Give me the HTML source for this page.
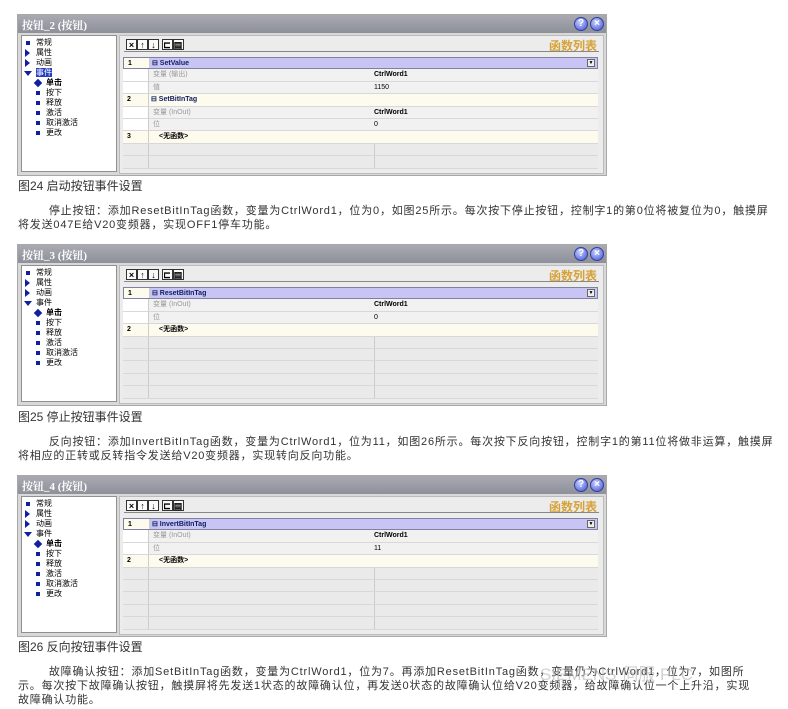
<!DOCTYPE html>
<html><head><meta charset="utf-8"><style>
*{margin:0;padding:0;box-sizing:border-box}
body{width:788px;height:709px;background:#fff;position:relative;overflow:hidden;font-family:"Liberation Sans","Noto Sans CJK SC",sans-serif}
.p{position:absolute;left:17px;width:590px;height:162px;background:#d8d8d8;border:1px solid #a8a8a8}
.tb{position:absolute;left:0;top:0;width:588px;height:18px;background:linear-gradient(#a9aab2,#8e909a);color:#fff;font:bold 11px "Liberation Serif","Noto Serif CJK SC",serif;padding:2px 0 0 4px}
.ic{position:absolute;top:2px;width:14px;height:14px;border-radius:50%;background:radial-gradient(circle at 40% 35%,#c8d0ff,#4050d0);border:1px solid #3040a0;color:#fff;font:bold 10px/12px sans-serif;text-align:center}
.tree{position:absolute;left:3px;top:20px;width:96px;height:137px;background:#fff;border:1px solid #909090;font:8px/10px "Liberation Sans","Noto Sans CJK SC",sans-serif;color:#000;padding-top:2px}
.tree div{height:10px;white-space:nowrap;position:relative}
.sq::before{content:"";position:absolute;width:4px;height:4px;background:#1020a0;left:-10px;top:3px}
.tr::before{content:"";position:absolute;left:-11px;top:1px;border-left:5px solid #1020a0;border-top:4px solid transparent;border-bottom:4px solid transparent}
.dn::before{content:"";position:absolute;left:-12px;top:3px;border-top:5px solid #1020a0;border-left:4px solid transparent;border-right:4px solid transparent}
.dm::before{content:"";position:absolute;left:-11px;top:2px;width:6px;height:6px;background:#1020a0;transform:rotate(45deg)}
.ra{position:absolute;left:101px;top:20px;width:485px;height:139px;background:#ececec;border:1px solid #bbb}
.tools{position:absolute;left:6px;top:3px;font:bold 9px/10px sans-serif}
.tools span{display:inline-block;width:11px;height:11px;border:1px solid #333;background:#fafafa;text-align:center;margin-right:0;vertical-align:top}
.fl{position:absolute;right:6px;top:1px;color:#d6a238;font:bold 12px "Liberation Sans","Noto Sans CJK SC",sans-serif}
.hl{position:absolute;left:4px;right:4px;top:15px;border-top:1px solid #888}
.tbl{position:absolute;left:3px;top:21px;width:475px}
.r{height:12.4px;border-bottom:1px solid #d8d8d8;font:7px/12px "Liberation Sans","Noto Sans CJK SC",sans-serif;position:relative;background:#f1f1f1}
.r .n{position:absolute;left:0;width:26px;height:100%;padding-left:4px;font-weight:bold;border-right:1px solid #ccc;background:#fff}
.r .a{position:absolute;left:30px;color:#999}
.r .b{position:absolute;left:251px;font-weight:bold}
.r .c{position:absolute;left:251px}
.h{background:#fdfaee}.h .n{background:#fdfaee}
.pu{background:#c8c4f4;border:1px solid #8080a0}
.pu .n{background:#fdfaee}
.fn{position:absolute;left:28px;font-weight:bold;color:#102060}
.e{background:#eaeaea}.e .n{background:#eaeaea}
.e::after{content:"";position:absolute;left:251px;top:0;height:100%;border-left:1px solid #ccc}
.cap{position:absolute;left:18px;font-size:12px;color:#333}
.tx{position:absolute;left:18px;width:775px;font-size:11px;line-height:14px;color:#333;letter-spacing:0.8px;white-space:nowrap}
</style></head><body>

<div class="p" style="top:14px">
<div class="tb">按钮_2 (按钮)</div><div class="ic" style="left:556px">?</div><div class="ic" style="left:572px">×</div>
<div class="tree" style="padding-left:14px"><div class="sq">常规</div><div class="tr">属性</div><div class="tr">动画</div><div class="dn"><span style="background:#2840c0;color:#fff">事件</span></div><div class="dm" style="left:10px;font-weight:bold">单击</div><div class="sq" style="left:10px">按下</div><div class="sq" style="left:10px">释放</div><div class="sq" style="left:10px">激活</div><div class="sq" style="left:10px">取消激活</div><div class="sq" style="left:10px">更改</div></div>
<div class="ra"><div class="tools"><span>×</span><span>↑</span><span>↓</span> <span>⊏</span><span>▤</span></div><div class="fl">函数列表</div><div class="hl"></div>
<div class="tbl">
<div class="r pu"><div class="n">1</div><div class="fn">⊟ SetValue</div><div style="position:absolute;right:2px;top:1px;width:8px;height:8px;background:#eee;border:1px solid #666;font-size:5px;line-height:7px;text-align:center">▼</div></div>
<div class="r"><div class="n"></div><div class="a">变量 (输出)</div><div class="b">CtrlWord1</div></div>
<div class="r"><div class="n"></div><div class="a">值</div><div class="c">1150</div></div>
<div class="r h"><div class="n">2</div><div class="fn">⊟ SetBitInTag</div></div>
<div class="r"><div class="n"></div><div class="a">变量 (InOut)</div><div class="b">CtrlWord1</div></div>
<div class="r"><div class="n"></div><div class="a">位</div><div class="c">0</div></div>
<div class="r h"><div class="n">3</div><div class="fn" style="left:36px;color:#000">&lt;无函数&gt;</div></div>
<div class="r e"><div class="n"></div></div><div class="r e"><div class="n"></div></div>
</div></div></div>
<div class="cap" style="top:177px">图24 启动按钮事件设置</div>
<div class="tx" style="top:204px">&nbsp;&nbsp;&nbsp;&nbsp;&nbsp;&nbsp;&nbsp;&nbsp;停止按钮：添加ResetBitInTag函数，变量为CtrlWord1，位为0，如图25所示。每次按下停止按钮，控制字1的第0位将被复位为0，触摸屏<br>将发送047E给V20变频器，实现OFF1停车功能。</div>

<div class="p" style="top:244px">
<div class="tb">按钮_3 (按钮)</div><div class="ic" style="left:556px">?</div><div class="ic" style="left:572px">×</div>
<div class="tree" style="padding-left:14px"><div class="sq">常规</div><div class="tr">属性</div><div class="tr">动画</div><div class="dn">事件</div><div class="dm" style="left:10px;font-weight:bold">单击</div><div class="sq" style="left:10px">按下</div><div class="sq" style="left:10px">释放</div><div class="sq" style="left:10px">激活</div><div class="sq" style="left:10px">取消激活</div><div class="sq" style="left:10px">更改</div></div>
<div class="ra"><div class="tools"><span>×</span><span>↑</span><span>↓</span> <span>⊏</span><span>▤</span></div><div class="fl">函数列表</div><div class="hl"></div>
<div class="tbl">
<div class="r pu"><div class="n">1</div><div class="fn">⊟ ResetBitInTag</div><div style="position:absolute;right:2px;top:1px;width:8px;height:8px;background:#eee;border:1px solid #666;font-size:5px;line-height:7px;text-align:center">▼</div></div>
<div class="r"><div class="n"></div><div class="a">变量 (InOut)</div><div class="b">CtrlWord1</div></div>
<div class="r"><div class="n"></div><div class="a">位</div><div class="c">0</div></div>
<div class="r h"><div class="n">2</div><div class="fn" style="left:36px;color:#000">&lt;无函数&gt;</div></div>
<div class="r e"><div class="n"></div></div><div class="r e"><div class="n"></div></div><div class="r e"><div class="n"></div></div><div class="r e"><div class="n"></div></div><div class="r e"><div class="n"></div></div>
</div></div></div>
<div class="cap" style="top:408px">图25 停止按钮事件设置</div>
<div class="tx" style="top:435px">&nbsp;&nbsp;&nbsp;&nbsp;&nbsp;&nbsp;&nbsp;&nbsp;反向按钮：添加InvertBitInTag函数，变量为CtrlWord1，位为11，如图26所示。每次按下反向按钮，控制字1的第11位将做非运算，触摸屏<br>将相应的正转或反转指令发送给V20变频器，实现转向反向功能。</div>

<div class="p" style="top:475px">
<div class="tb">按钮_4 (按钮)</div><div class="ic" style="left:556px">?</div><div class="ic" style="left:572px">×</div>
<div class="tree" style="padding-left:14px"><div class="sq">常规</div><div class="tr">属性</div><div class="tr">动画</div><div class="dn">事件</div><div class="dm" style="left:10px;font-weight:bold">单击</div><div class="sq" style="left:10px">按下</div><div class="sq" style="left:10px">释放</div><div class="sq" style="left:10px">激活</div><div class="sq" style="left:10px">取消激活</div><div class="sq" style="left:10px">更改</div></div>
<div class="ra"><div class="tools"><span>×</span><span>↑</span><span>↓</span> <span>⊏</span><span>▤</span></div><div class="fl">函数列表</div><div class="hl"></div>
<div class="tbl">
<div class="r pu"><div class="n">1</div><div class="fn">⊟ InvertBitInTag</div><div style="position:absolute;right:2px;top:1px;width:8px;height:8px;background:#eee;border:1px solid #666;font-size:5px;line-height:7px;text-align:center">▼</div></div>
<div class="r"><div class="n"></div><div class="a">变量 (InOut)</div><div class="b">CtrlWord1</div></div>
<div class="r"><div class="n"></div><div class="a">位</div><div class="c">11</div></div>
<div class="r h"><div class="n">2</div><div class="fn" style="left:36px;color:#000">&lt;无函数&gt;</div></div>
<div class="r e"><div class="n"></div></div><div class="r e"><div class="n"></div></div><div class="r e"><div class="n"></div></div><div class="r e"><div class="n"></div></div><div class="r e"><div class="n"></div></div>
</div></div></div>
<div class="cap" style="top:638px">图26 反向按钮事件设置</div>
<div class="tx" style="top:665px">&nbsp;&nbsp;&nbsp;&nbsp;&nbsp;&nbsp;&nbsp;&nbsp;故障确认按钮：添加SetBitInTag函数，变量为CtrlWord1，位为7。再添加ResetBitInTag函数，变量仍为CtrlWord1，位为7，如图所<br>示。每次按下故障确认按钮，触摸屏将先发送1状态的故障确认位，再发送0状态的故障确认位给V20变频器，给故障确认位一个上升沿，实现<br>故障确认功能。</div>
<div style="position:absolute;left:540px;top:660px;font-size:17px;color:rgba(180,180,180,.6)">SIEMENS 伺服 PLC</div>
</body></html>
